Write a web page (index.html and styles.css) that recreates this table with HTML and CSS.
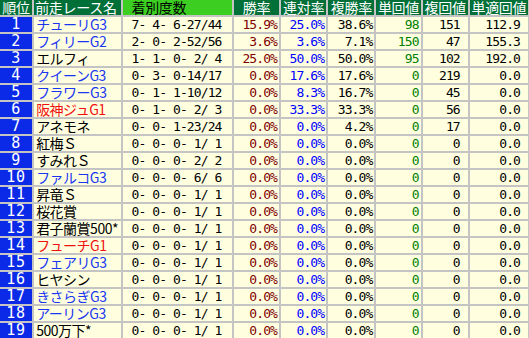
FILE: index.html
```html
<!DOCTYPE html>
<html lang="ja">
<head>
<meta charset="utf-8">
<title>前走レース別成績</title>
<link rel="stylesheet" href="styles.css">
</head>
<body>
<table class="stats">
  <colgroup>
    <col class="w-rank"><col class="w-name"><col class="w-rec"><col class="w-pct"><col class="w-pct"><col class="w-pct3"><col class="w-ret"><col class="w-pct"><col class="w-ret4">
  </colgroup>
  <thead>
    <tr>
      <th class="h-rank">順位</th>
      <th class="h-name">前走レース名</th>
      <th class="h-rec">着別度数</th>
      <th class="h-c">勝率</th>
      <th class="h-c">連対率</th>
      <th class="h-c">複勝率</th>
      <th class="h-c">単回値</th>
      <th class="h-c">複回値</th>
      <th class="h-c">単適回値</th>
    </tr>
  </thead>
  <tbody>
    <tr><td class="rank">1</td><td class="name g">チューリG3</td><td class="rec">7- 4- 6-27/44</td><td class="num win">15.9%</td><td class="num ren">25.0%</td><td class="num">38.6%</td><td class="num tan">98</td><td class="num pad">151</td><td class="num pad">112.9</td></tr>
    <tr><td class="rank">2</td><td class="name g">フィリーG2</td><td class="rec">2- 0- 2-52/56</td><td class="num win">3.6%</td><td class="num ren">3.6%</td><td class="num">7.1%</td><td class="num tan">150</td><td class="num pad">47</td><td class="num pad">155.3</td></tr>
    <tr><td class="rank">3</td><td class="name">エルフィ</td><td class="rec">1- 1- 0- 2/ 4</td><td class="num win">25.0%</td><td class="num ren">50.0%</td><td class="num">50.0%</td><td class="num tan">95</td><td class="num pad">102</td><td class="num pad">192.0</td></tr>
    <tr><td class="rank">4</td><td class="name g">クイーンG3</td><td class="rec">0- 3- 0-14/17</td><td class="num win">0.0%</td><td class="num ren">17.6%</td><td class="num">17.6%</td><td class="num tan">0</td><td class="num pad">219</td><td class="num pad">0.0</td></tr>
    <tr><td class="rank">5</td><td class="name g">フラワーG3</td><td class="rec">0- 1- 1-10/12</td><td class="num win">0.0%</td><td class="num ren">8.3%</td><td class="num">16.7%</td><td class="num tan">0</td><td class="num pad">45</td><td class="num pad">0.0</td></tr>
    <tr><td class="rank">6</td><td class="name g1">阪神ジュG1</td><td class="rec">0- 1- 0- 2/ 3</td><td class="num win">0.0%</td><td class="num ren">33.3%</td><td class="num">33.3%</td><td class="num tan">0</td><td class="num pad">56</td><td class="num pad">0.0</td></tr>
    <tr><td class="rank">7</td><td class="name">アネモネ</td><td class="rec">0- 0- 1-23/24</td><td class="num win">0.0%</td><td class="num ren">0.0%</td><td class="num">4.2%</td><td class="num tan">0</td><td class="num pad">17</td><td class="num pad">0.0</td></tr>
    <tr><td class="rank">8</td><td class="name">紅梅Ｓ</td><td class="rec">0- 0- 0- 1/ 1</td><td class="num win">0.0%</td><td class="num ren">0.0%</td><td class="num">0.0%</td><td class="num tan">0</td><td class="num pad">0</td><td class="num pad">0.0</td></tr>
    <tr><td class="rank">9</td><td class="name">すみれＳ</td><td class="rec">0- 0- 0- 2/ 2</td><td class="num win">0.0%</td><td class="num ren">0.0%</td><td class="num">0.0%</td><td class="num tan">0</td><td class="num pad">0</td><td class="num pad">0.0</td></tr>
    <tr><td class="rank">10</td><td class="name g">ファルコG3</td><td class="rec">0- 0- 0- 6/ 6</td><td class="num win">0.0%</td><td class="num ren">0.0%</td><td class="num">0.0%</td><td class="num tan">0</td><td class="num pad">0</td><td class="num pad">0.0</td></tr>
    <tr><td class="rank">11</td><td class="name">昇竜Ｓ</td><td class="rec">0- 0- 0- 1/ 1</td><td class="num win">0.0%</td><td class="num ren">0.0%</td><td class="num">0.0%</td><td class="num tan">0</td><td class="num pad">0</td><td class="num pad">0.0</td></tr>
    <tr><td class="rank">12</td><td class="name">桜花賞</td><td class="rec">0- 0- 0- 1/ 1</td><td class="num win">0.0%</td><td class="num ren">0.0%</td><td class="num">0.0%</td><td class="num tan">0</td><td class="num pad">0</td><td class="num pad">0.0</td></tr>
    <tr><td class="rank">13</td><td class="name">君子蘭賞500*</td><td class="rec">0- 0- 0- 1/ 1</td><td class="num win">0.0%</td><td class="num ren">0.0%</td><td class="num">0.0%</td><td class="num tan">0</td><td class="num pad">0</td><td class="num pad">0.0</td></tr>
    <tr><td class="rank">14</td><td class="name g1">フューチG1</td><td class="rec">0- 0- 0- 1/ 1</td><td class="num win">0.0%</td><td class="num ren">0.0%</td><td class="num">0.0%</td><td class="num tan">0</td><td class="num pad">0</td><td class="num pad">0.0</td></tr>
    <tr><td class="rank">15</td><td class="name g">フェアリG3</td><td class="rec">0- 0- 0- 1/ 1</td><td class="num win">0.0%</td><td class="num ren">0.0%</td><td class="num">0.0%</td><td class="num tan">0</td><td class="num pad">0</td><td class="num pad">0.0</td></tr>
    <tr><td class="rank">16</td><td class="name">ヒヤシン</td><td class="rec">0- 0- 0- 1/ 1</td><td class="num win">0.0%</td><td class="num ren">0.0%</td><td class="num">0.0%</td><td class="num tan">0</td><td class="num pad">0</td><td class="num pad">0.0</td></tr>
    <tr><td class="rank">17</td><td class="name g">きさらぎG3</td><td class="rec">0- 0- 0- 1/ 1</td><td class="num win">0.0%</td><td class="num ren">0.0%</td><td class="num">0.0%</td><td class="num tan">0</td><td class="num pad">0</td><td class="num pad">0.0</td></tr>
    <tr><td class="rank">18</td><td class="name g">アーリンG3</td><td class="rec">0- 0- 0- 1/ 1</td><td class="num win">0.0%</td><td class="num ren">0.0%</td><td class="num">0.0%</td><td class="num tan">0</td><td class="num pad">0</td><td class="num pad">0.0</td></tr>
    <tr><td class="rank">19</td><td class="name">500万下*</td><td class="rec">0- 0- 0- 1/ 1</td><td class="num win">0.0%</td><td class="num ren">0.0%</td><td class="num">0.0%</td><td class="num tan">0</td><td class="num pad">0</td><td class="num pad">0.0</td></tr>
  </tbody>
</table>
</body>
</html>
```
FILE: styles.css
```css
html, body {
  margin: 0;
  padding: 0;
  background: #ffffff;
}

.stats {
  border-collapse: separate;
  border-spacing: 2px;
  background: #c4c4c4;
  margin: -2px 0 0 -2px;
  table-layout: fixed;
  width: 532px;
  font-family: "Noto Sans CJK JP", sans-serif;
  font-size: 14px;
}

.w-rank { width: 32px; }
.w-name { width: 87px; }
.w-rec { width: 108px; }
.w-pct { width: 45px; }
.w-pct3 { width: 46px; }
.w-ret { width: 44px; }
.w-ret4 { width: 58px; }

.stats th,
.stats td {
  height: 15px;
  padding: 0;
  line-height: 15px;
  white-space: pre;
  font-weight: normal;
}

.stats th {
  background: #007038;
  color: #ffffff;
  text-align: center;
  font-size: 14px;
  letter-spacing: -0.3px;
}

.stats th.h-name {
  text-align: left;
  padding-left: 1px;
}

.stats th.h-rec {
  background: #3ccf22;
  color: #000000;
  text-align: left;
  padding-left: 8px;
}

.stats td {
  background: #ffffe0;
  color: #000000;
}

.stats td.rank {
  background: #0a2ae8;
  color: #ffffff;
  text-align: center;
  font-family: "DejaVu Sans Mono", monospace;
  font-size: 15px;
  letter-spacing: 0.8px;
}

.stats td.name {
  padding-left: 2px;
  font-size: 14px;
  letter-spacing: -0.5px;
}

.stats td.name.g { color: #1a36f0; }
.stats td.name.g1 { color: #f01010; }

.stats td.rec {
  padding-left: 8px;
  font-family: "DejaVu Sans Mono", monospace;
  font-size: 13px;
  letter-spacing: -0.9px;
}

.stats td.num {
  text-align: right;
  padding-right: 2px;
  font-family: "DejaVu Sans Mono", monospace;
  font-size: 13px;
  letter-spacing: -0.9px;
}

.stats td.num.pad { padding-right: 8px; }
.stats td.win { color: #800000; }
.stats td.ren { color: #0000ff; }
.stats td.tan { color: #008000; }
```
